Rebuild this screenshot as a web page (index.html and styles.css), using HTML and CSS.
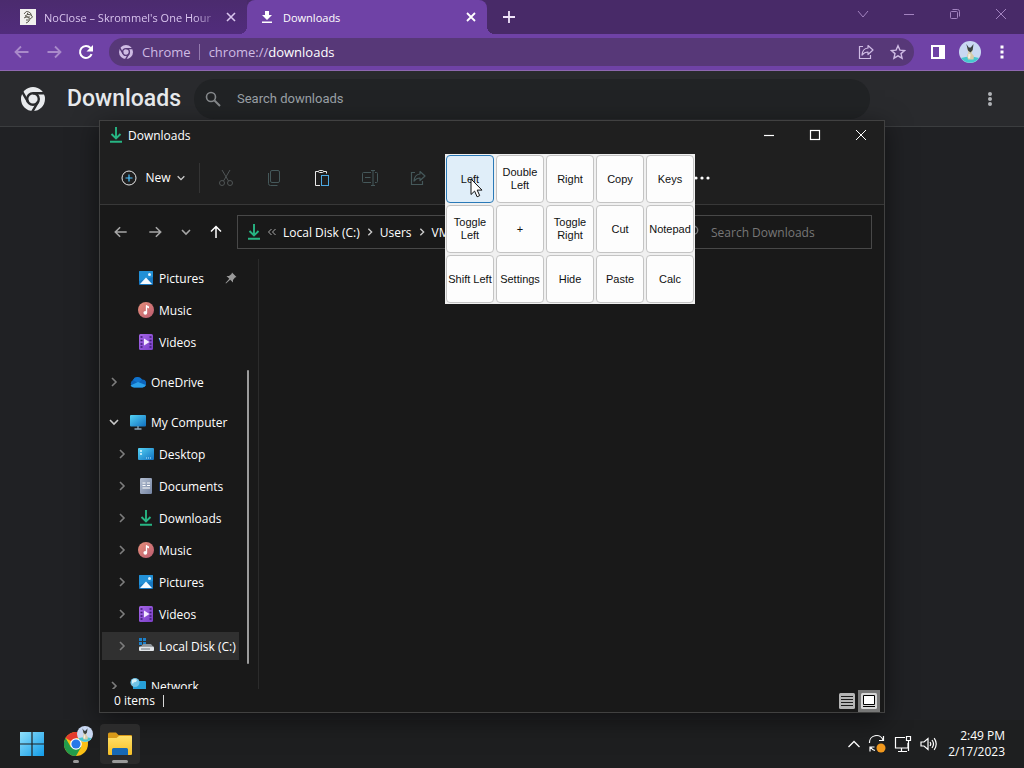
FILE: index.html
```html
<!DOCTYPE html>
<html lang="en">
  <head>
    <title>Downloads</title>
    <meta charset="UTF-8">
    <meta name="viewport" content="width=device-width, initial-scale=1.0">
    <link rel="stylesheet" href="styles.css">
  </head>
  <body>
    <!-- shared icons -->
    <svg class="sprite" aria-hidden="true">
      <defs>
        <linearGradient id="gBlue" x1="0" y1="0" x2="1" y2="1"><stop offset="0" stop-color="#55d3f5"/><stop offset="1" stop-color="#0f6fc0"/></linearGradient>
        <linearGradient id="gWin" x1="0" y1="0" x2="1" y2="1"><stop offset="0" stop-color="#8fe0fb"/><stop offset="1" stop-color="#119be8"/></linearGradient>
        <linearGradient id="gMusic" x1="0" y1="0" x2="1" y2="1"><stop offset="0" stop-color="#e8907a"/><stop offset="1" stop-color="#b95a70"/></linearGradient>
        <linearGradient id="gVideo" x1="0" y1="0" x2="1" y2="1"><stop offset="0" stop-color="#a566e8"/><stop offset="1" stop-color="#7a3fc6"/></linearGradient>
        <linearGradient id="gDoc" x1="0" y1="0" x2="1" y2="1"><stop offset="0" stop-color="#b4bfd2"/><stop offset="1" stop-color="#7585a3"/></linearGradient>
        <linearGradient id="gFolder" x1="0" y1="0" x2="0" y2="1"><stop offset="0" stop-color="#ffe069"/><stop offset="1" stop-color="#f6bf26"/></linearGradient>
      </defs>
      <symbol id="download" viewBox="0 0 16 16"><path d="M8 0v11M3.500 7l4.500 4.500L12.500 7M2 14.800h12" fill="none" stroke="#27b583" stroke-width="1.900"/></symbol>
      <symbol id="pictures" viewBox="0 0 16 16"><rect x="1" y="1" width="14" height="14" rx="1" fill="#1778c2"/><path d="M1 2a1 1 0 0 1 1-1h12a1 1 0 0 1 1 1v5L1 11z" fill="#2290d6"/><path d="M2 14l6-6.500 6 6.500z" fill="#f3faff"/><circle cx="11.500" cy="4.500" r="1.500" fill="#e0f3ff"/></symbol>
      <symbol id="music" viewBox="0 0 16 16"><circle cx="8" cy="8" r="8" fill="url(#gMusic)"/><path d="M8.500 3.500v7" stroke="#fff" stroke-width="1.300"/><path d="M8 3l3 1.500v2L8 5z" fill="#fff"/><circle cx="7.300" cy="10.800" r="1.900" fill="#fff"/></symbol>
      <symbol id="videos" viewBox="0 0 16 16"><rect x="1" width="14" height="16" rx="1.500" fill="url(#gVideo)"/><path d="M2.500 3h2M2.500 6.500h2M2.500 10h2M2.500 13h2M11.500 3h2M11.500 6.500h2M11.500 10h2M11.500 13h2" stroke="#3b1b72" stroke-width="1.600"/><path d="M6 4.500v7l5.500-3.500z" fill="#f4eaff"/></symbol>
      <symbol id="onedrive" viewBox="0 0 16 16"><path d="M4 13.500a4 4 0 0 1-1-7.500 5 5 0 0 1 9-.5 4 4 0 0 1 .5 8z" fill="#0c62b8"/><path d="M3 6a5 5 0 0 1 9-.5L8 9z" fill="#1173cc"/><path d="M4 13.500a4 4 0 0 1-3.500-2L8 8l7.800 3a3.600 3.600 0 0 1-3.300 2.500z" fill="#2aa0ea"/></symbol>
      <symbol id="computer" viewBox="0 0 16 16"><rect y="1" width="16" height="11.500" rx="1" fill="url(#gBlue)"/><path d="M8 12v3M4.500 15h7" stroke="#8ba6b8" stroke-width="1.300"/></symbol>
      <symbol id="desktop" viewBox="0 0 16 16"><rect y="2" width="16" height="12" rx="1" fill="url(#gBlue)"/><path d="M2 5h2M2 8h2" stroke="#dff7ff" stroke-width="1.500"/><path d="M8 12h6" stroke="#bfeaff" stroke-width="1" stroke-dasharray="1 1"/></symbol>
      <symbol id="documents" viewBox="0 0 16 16"><rect x="2" width="12" height="16" rx="1.200" fill="url(#gDoc)"/><path d="M4.500 5h3M9 5h3M4.500 7.500h3M9 7.500h3M4.500 10h7.500" stroke="#fff" stroke-width="1.200"/></symbol>
      <symbol id="disk" viewBox="0 0 16 16"><path d="M1 0h3v3H1zM5 0h3v3H5zM1 4h3v3H1zM5 4h3v3H5z" fill="#1d80c9"/><path d="M3 8.500l2-2.500h8l2 2.500z" fill="#8d959c"/><rect x="1" y="8.500" width="15" height="4.500" rx="1" fill="#e2e6e9"/><path d="M3 11h9" stroke="#6e777e"/></symbol>
      <symbol id="network" viewBox="0 0 16 16"><rect x="3" y="3" width="13" height="9" rx="1" fill="#27a0d8"/><path d="M9 12v3M6 15h7" stroke="#8ba6b8"/><circle cx="5" cy="4.500" r="4.500" fill="#71c3e6"/><path d="M2 2q3-2 5 0-1 3-3 2-1 3-2 1z" fill="#d9f2fa"/></symbol>
      <symbol id="chev-right" viewBox="0 0 12 12"><path d="M4 2l4 4-4 4" fill="none" stroke="currentColor" stroke-width="1.600"/></symbol>
      <symbol id="chev-down" viewBox="0 0 12 12"><path d="M2 4l4 4 4-4" fill="none" stroke="currentColor" stroke-width="1.600"/></symbol>
      <symbol id="arrow-left" viewBox="0 0 16 16"><path d="M14.500 8h-13M7 2.500L1.500 8 7 13.500" fill="none" stroke="currentColor" stroke-width="1.800"/></symbol>
      <symbol id="arrow-right" viewBox="0 0 16 16"><path d="M1.500 8h13M9 2.500L14.500 8 9 13.500" fill="none" stroke="currentColor" stroke-width="1.800"/></symbol>
      <symbol id="close" viewBox="0 0 12 12"><path d="M1 1l10 10M11 1L1 11" fill="none" stroke="currentColor"/></symbol>
      <symbol id="search" viewBox="0 0 16 16"><circle cx="6" cy="6" r="4.500" fill="none" stroke="currentColor" stroke-width="1.600"/><path d="M9.500 9.500L15 15" stroke="currentColor" stroke-width="1.900"/></symbol>
      <symbol id="share" viewBox="0 0 16 16"><path d="M5 2.500H1.500v12h11V11" fill="none" stroke="currentColor" stroke-width="1.200"/><path d="M10 1.500L15 6l-5 4.500V8Q6.500 8 4 11q.5-6.500 6-7z" fill="none" stroke="currentColor" stroke-width="1.200" stroke-linejoin="round"/></symbol>
      <symbol id="chrome-mono" viewBox="0 0 24 24"><circle cx="12" cy="12" r="12" fill="currentColor"/><g fill="none" stroke="var(--cut)" stroke-width="2.400"><circle cx="12" cy="12" r="5.800"/><path d="M12 6.200h12M7 14.900L1.200 4.800M17 14.900L11.300 24.700"/></g></symbol>
      <symbol id="dog" viewBox="0 0 22 22"><circle cx="11" cy="11" r="11" fill="#c9d8f2"/><path d="M2 17q9-3 18 0a11 11 0 0 1-18 0" fill="#47c8cf"/><path d="M8 7h5l.5 3-1 2 2.500 3-.5 3.500H9l-1-4 1.300-3z" fill="#d8cda8"/><path d="M7.300 3l2.500 3.500h2L14.500 3l-.8 6-2.200 2.500L9 9.500z" fill="#3a4140"/><path d="M9.500 12.500l2 1-.5 4-2-.5z" fill="#f3efe0"/></symbol>
    </svg>

    <div class="screen">
      <main class="browser">
        <div class="tabstrip">
          <div class="tab">
            <svg class="i16" viewBox="0 0 16 16"><path fill="#f1f1ee" d="M0 0h16v16H0z"/><path d="M4 5q2-4 5-2t2 3M5 7q3-3 6-1t-1 4M4 9q3-3 5 0t-3 5M7 4l2 2M6 11h3M5 8h5" fill="none" stroke="#5c5a50"/></svg>
            <span class="tab-title fade">NoClose – Skrommel's One Hour</span>
            <button class="tab-close" aria-label="Close tab"><svg viewBox="0 0 12 12"><path d="M2 2l8 8M10 2l-8 8" stroke="currentColor" stroke-width="1.600"/></svg></button>
          </div>
          <div class="tab active">
            <svg class="i14" viewBox="0 0 14 14"><path d="M5 1h4v4h3L7 10 2 5h3zM2 11.500h10v1.600H2z" fill="#fff"/></svg>
            <span class="tab-title">Downloads</span>
            <button class="tab-close" aria-label="Close tab"><svg viewBox="0 0 12 12"><path d="M2 2l8 8M10 2l-8 8" stroke="currentColor" stroke-width="1.800"/></svg></button>
          </div>
          <button class="new-tab" aria-label="New tab"><svg viewBox="0 0 14 14"><path d="M7 1v12M1 7h12" stroke="currentColor" stroke-width="1.800"/></svg></button>
          <div class="controls dim">
            <button aria-label="Search tabs"><svg viewBox="0 0 12 12"><path d="M1 3l5 6 5-6" fill="none" stroke="currentColor"/></svg></button>
            <button aria-label="Minimize"><svg viewBox="0 0 12 12"><path d="M1 6.500h10" stroke="currentColor"/></svg></button>
            <button aria-label="Restore"><svg viewBox="0 0 12 12"><rect x="1.500" y="3.500" width="7" height="7" rx="1" fill="none" stroke="currentColor"/><path d="M3.500 1.500h5a2 2 0 0 1 2 2v5" fill="none" stroke="currentColor"/></svg></button>
            <button aria-label="Close"><svg><use href="#close"/></svg></button>
          </div>
        </div>

        <div class="toolbar">
          <button class="tool faded" aria-label="Back"><svg class="i16"><use href="#arrow-left"/></svg></button>
          <button class="tool faded" aria-label="Forward"><svg class="i16"><use href="#arrow-right"/></svg></button>
          <button class="tool" aria-label="Reload"><svg class="i16" viewBox="0 0 16 16"><path d="M13.600 10.200A6 6 0 1 1 12.500 4" fill="none" stroke="currentColor" stroke-width="2"/><path d="M15 1v6.500H8.500z" fill="currentColor"/></svg></button>
          <div class="omnibox">
            <svg class="i14"><use href="#chrome-mono"/></svg>
            <span class="site">Chrome</span>
            <span class="url">chrome://<b>downloads</b></span>
            <button class="tool" aria-label="Share"><svg class="i16"><use href="#share"/></svg></button>
            <button class="tool" aria-label="Bookmark"><svg class="i16" viewBox="0 0 16 16"><path d="M8 1.800l1.900 4.300 4.700.4-3.600 3.100 1.100 4.600L8 11.800l-4.100 2.400L5 9.600 1.400 6.500l4.700-.4z" fill="none" stroke="currentColor" stroke-width="1.400"/></svg></button>
          </div>
          <button class="tool" aria-label="Side panel"><svg class="i16" viewBox="0 0 16 16"><path d="M1 1h14v14H1zM3 3v10h6V3z" fill="currentColor" fill-rule="evenodd"/></svg></button>
          <button class="tool" aria-label="Profile"><svg class="i22"><use href="#dog"/></svg></button>
          <button class="tool" aria-label="Menu"><svg class="i16" viewBox="0 0 16 16"><path d="M6.500 1.500h3v3h-3zM6.500 6.500h3v3h-3zM6.500 11.500h3v3h-3z" fill="currentColor"/></svg></button>
        </div>

        <header class="page-head">
          <svg class="i24"><use href="#chrome-mono"/></svg>
          <h1>Downloads</h1>
          <label class="page-search">
            <svg class="i16"><use href="#search"/></svg>
            <input type="search" placeholder="Search downloads" aria-label="Search downloads">
          </label>
          <button class="more" aria-label="More actions"><svg class="i16" viewBox="0 0 16 16"><g fill="currentColor"><circle cx="8" cy="3" r="2"/><circle cx="8" cy="8" r="2"/><circle cx="8" cy="13" r="2"/></g></svg></button>
        </header>
      </main>

      <section class="explorer">
        <div class="titlebar">
          <svg class="i16"><use href="#download"/></svg>
          <span>Downloads</span>
          <div class="controls">
            <button aria-label="Minimize"><svg viewBox="0 0 12 12"><path d="M1 6.500h10" stroke="currentColor" stroke-width="1.200"/></svg></button>
            <button aria-label="Maximize"><svg viewBox="0 0 12 12"><rect x="1.500" y="1.500" width="9" height="9" fill="none" stroke="currentColor" stroke-width="1.200"/></svg></button>
            <button aria-label="Close"><svg><use href="#close"/></svg></button>
          </div>
        </div>

        <div class="commands">
          <button class="new"><svg class="i16" viewBox="0 0 16 16"><circle cx="8" cy="8" r="7" fill="none" stroke="#e6e6e6"/><path d="M8 4.500v7M4.500 8h7" stroke="#4cc2ff" stroke-width="1.200"/></svg>New<svg class="i10"><use href="#chev-down"/></svg></button>
          <button class="cmd" aria-label="Cut" disabled><svg viewBox="0 0 16 16"><g fill="none" stroke="currentColor"><path d="M4 0l6.500 11M12 0L5.500 11"/><circle cx="4" cy="13" r="2.500"/><circle cx="12" cy="13" r="2.500"/></g></svg></button>
          <button class="cmd teal" aria-label="Copy" disabled><svg viewBox="0 0 16 16"><g fill="none" stroke="currentColor"><rect x="4.500" y=".5" width="9" height="12" rx="1.500"/><path d="M2.500 3v10.500a2 2 0 0 0 2 2h7"/></g></svg></button>
          <button class="cmd" aria-label="Paste"><svg viewBox="0 0 16 16"><path d="M6 15.500H1.500v-14h3M9.500 1.500h3v2" fill="none" stroke="#e8e8e8"/><rect x="4.500" y=".5" width="5" height="2" rx="1" fill="none" stroke="#e8e8e8"/><rect x="7.500" y="5.500" width="7" height="10" fill="none" stroke="#4ca9e4"/></svg></button>
          <button class="cmd teal" aria-label="Rename" disabled><svg viewBox="0 0 16 16"><path d="M9 2.500H1.500a1 1 0 0 0-1 1v8a1 1 0 0 0 1 1H9M13 2.500h1.500a1 1 0 0 1 1 1v8a1 1 0 0 1-1 1H13M11 .5v15M9 .5h4M9 15.500h4M3 7.500h5.500" fill="none" stroke="currentColor"/></svg></button>
          <button class="cmd teal" aria-label="Share" disabled><svg><use href="#share"/></svg></button>
          <button class="cmd see-more" aria-label="See more"><svg viewBox="0 0 16 16"><g fill="currentColor"><circle cx="2" cy="8" r="1.600"/><circle cx="8" cy="8" r="1.600"/><circle cx="14" cy="8" r="1.600"/></g></svg></button>
        </div>

        <div class="nav">
          <button class="grey" aria-label="Back"><svg class="i14"><use href="#arrow-left"/></svg></button>
          <button class="grey" aria-label="Forward"><svg class="i14"><use href="#arrow-right"/></svg></button>
          <button class="grey narrow" aria-label="Recent locations"><svg class="i12"><use href="#chev-down"/></svg></button>
          <button aria-label="Up"><svg class="i14" viewBox="0 0 14 14"><path d="M7 13V1.500M2 6.500l5-5 5 5" fill="none" stroke="currentColor" stroke-width="1.500"/></svg></button>
          <div class="address">
            <svg class="i16"><use href="#download"/></svg>
            <svg class="i10" viewBox="0 0 10 10"><path d="M4.500 2L1.500 5l3 3M8.500 2l-3 3 3 3" fill="none" stroke="#aaa"/></svg>
            <a href="#">Local Disk (C:)</a>
            <svg class="i10"><use href="#chev-right"/></svg>
            <a href="#">Users</a>
            <svg class="i10"><use href="#chev-right"/></svg>
            <a href="#">VM</a>
          </div>
          <label class="find">
            <svg class="i14"><use href="#search"/></svg>
            <input type="search" placeholder="Search Downloads" aria-label="Search Downloads">
          </label>
        </div>

        <div class="content">
          <aside class="side">
            <ul class="tree">
              <li class="sub"><span class="twist"></span><svg class="i16"><use href="#pictures"/></svg>Pictures<svg class="pin" viewBox="0 0 12 12"><path d="M7 .5L11.500 5l-1.500.5L8 8v2.500L5.200 7.700 1 11.500.5 11l3.800-4.200L1.500 4H4l2.500-2z" fill="#9a9a9a"/></svg></li>
              <li class="sub"><span class="twist"></span><svg class="i16"><use href="#music"/></svg>Music</li>
              <li class="sub"><span class="twist"></span><svg class="i16"><use href="#videos"/></svg>Videos</li>
              <li class="top"><svg class="twist"><use href="#chev-right"/></svg><svg class="i16"><use href="#onedrive"/></svg>OneDrive</li>
              <li class="top"><svg class="twist open"><use href="#chev-down"/></svg><svg class="i16"><use href="#computer"/></svg>My Computer</li>
              <li class="sub"><svg class="twist"><use href="#chev-right"/></svg><svg class="i16"><use href="#desktop"/></svg>Desktop</li>
              <li class="sub"><svg class="twist"><use href="#chev-right"/></svg><svg class="i16"><use href="#documents"/></svg>Documents</li>
              <li class="sub"><svg class="twist"><use href="#chev-right"/></svg><svg class="i16"><use href="#download"/></svg>Downloads</li>
              <li class="sub"><svg class="twist"><use href="#chev-right"/></svg><svg class="i16"><use href="#music"/></svg>Music</li>
              <li class="sub"><svg class="twist"><use href="#chev-right"/></svg><svg class="i16"><use href="#pictures"/></svg>Pictures</li>
              <li class="sub"><svg class="twist"><use href="#chev-right"/></svg><svg class="i16"><use href="#videos"/></svg>Videos</li>
              <li class="sub selected"><svg class="twist"><use href="#chev-right"/></svg><svg class="i16"><use href="#disk"/></svg>Local Disk (C:)</li>
              <li class="top"><svg class="twist"><use href="#chev-right"/></svg><svg class="i16"><use href="#network"/></svg>Network</li>
            </ul>
            <div class="scrollbar"></div>
          </aside>
          <div class="files"></div>
        </div>

        <footer class="status">
          <span class="count">0 items</span>
          <button class="view" aria-label="Details view"><svg class="i16" viewBox="0 0 16 16"><rect width="16" height="16" rx="1.500" fill="#b5b5b5"/><path d="M2 3.500h12M2 6.500h12M2 9.500h12M2 12.500h12" stroke="#1c1c1c"/></svg></button>
          <button class="view on" aria-label="Large icons view"><svg class="i16" viewBox="0 0 16 16"><rect width="16" height="16" rx="1.500" fill="#d6d6d6"/><path d="M2.500 2.500h11v9h-11z" fill="#fff" stroke="#000"/><path d="M2 13.500h12" stroke="#000"/></svg></button>
        </footer>
      </section>

      <!-- floating click pad -->
      <div class="pad">
        <button class="hover">Left</button><button>Double<br>Left</button><button>Right</button><button>Copy</button><button>Keys</button>
        <button>Toggle<br>Left</button><button>+</button><button>Toggle<br>Right</button><button>Cut</button><button>Notepad</button>
        <button>Shift Left</button><button>Settings</button><button>Hide</button><button>Paste</button><button>Calc</button>
        <svg class="cursor" viewBox="0 0 13 20"><path d="M1 1v15.500l3.600-3.400 2.500 5.700 2.600-1.200-2.500-5.500H12z" fill="#fff" stroke="#111"/></svg>
      </div>

      <nav class="taskbar">
        <button class="app" aria-label="Start"><svg class="i24" viewBox="0 0 24 24"><path d="M0 0h11.400v11.400H0zM12.600 0H24v11.400H12.600zM0 12.600h11.400V24H0zM12.600 12.600H24V24H12.600z" fill="url(#gWin)"/></svg></button>
        <button class="app" aria-label="Chrome">
          <svg class="i24" viewBox="0 0 24 24"><circle cx="12" cy="12" r="12" fill="#fbc116"/><path d="M12 12L1.600 6A12 12 0 0 1 22.400 6H12z" fill="#e33b2e"/><path d="M1.600 6A12 12 0 0 0 12 24l5.200-9L12 12 6.800 15z" fill="#229b4b"/><circle cx="12" cy="12" r="5.800" fill="#fff"/><circle cx="12" cy="12" r="4.600" fill="#2878e8"/></svg>
          <svg class="badge"><use href="#dog"/></svg>
          <span class="running"></span>
        </button>
        <button class="app current" aria-label="File Explorer">
          <svg class="i24" viewBox="0 0 24 24"><path d="M0 2a1.500 1.500 0 0 1 1.500-1.500H8L10.500 3H23a1 1 0 0 1 1 1v4H0z" fill="#d99a18"/><path d="M0 6h8.500L11 4h12a1 1 0 0 1 1 1v17a1 1 0 0 1-1 1H1a1 1 0 0 1-1-1z" fill="url(#gFolder)"/><path d="M4 23v-5.500A1.500 1.500 0 0 1 5.500 16h13a1.500 1.500 0 0 1 1.500 1.500V23z" fill="#1769b5"/></svg>
          <span class="running wide"></span>
        </button>
        <div class="tray">
          <svg class="i12" viewBox="0 0 12 12"><path d="M.5 9L6 3.500 11.500 9" fill="none" stroke="currentColor" stroke-width="1.300"/></svg>
          <svg class="i18" viewBox="0 0 18 18"><g fill="none" stroke="currentColor" stroke-width="1.200"><path d="M1.500 8A7 7 0 0 1 15 5M15.500 1v4.500H11M7 15.500A7 7 0 0 1 2.500 12M2 16.500V12h4.500"/></g><circle cx="13" cy="13" r="4.500" fill="#f39a1e"/></svg>
          <svg class="i18" viewBox="0 0 18 18"><g fill="none" stroke="currentColor" stroke-width="1.200"><path d="M11 2.500H1.500v10.500H14V8M7.500 13v3M4 16.500h9"/><path d="M12.500 1.500h4v4h-4zM14.500 5.500V16"/></g></svg>
          <svg class="i18" viewBox="0 0 18 18"><g fill="none" stroke="currentColor" stroke-width="1.200"><path d="M1 7v4h3l4 3.500v-11L4 7zM10 7q1.500 2 0 4M12 5q3 4 0 8M14.200 3.200q4 5.800 0 11.600"/></g></svg>
        </div>
        <time class="clock" datetime="2023-02-17T14:49">2:49 PM<br>2/17/2023</time>
      </nav>
    </div>
  </body>
</html>
```

FILE: styles.css
```css
*{
  box-sizing: border-box;
}

body{
  margin: 0;
  background: #202124;
  color: #fff;
  font-family: "Open Sans", "Noto Sans", sans-serif;
  font-size: 12px;
}

button, input{
  margin: 0;
  padding: 0;
  border: 0;
  background: none;
  color: inherit;
  font: inherit;
}

button{
  display: flex;
  align-items: center;
  justify-content: center;
}

input{
  flex: 1;
  min-width: 0;
  outline: none;
}

svg{
  flex: none;
}

.sprite{
  position: absolute;
  width: 0;
  height: 0;
}

.i10{ width: 10px; height: 10px; }
.i12{ width: 12px; height: 12px; }
.i14{ width: 14px; height: 14px; }
.i16{ width: 16px; height: 16px; }
.i18{ width: 18px; height: 18px; }
.i22{ width: 22px; height: 22px; }
.i24{ width: 24px; height: 24px; }

.screen{
  position: relative;
  display: flex;
  flex-direction: column;
  height: 100vh;
  overflow: hidden;
}

.browser{
  flex: 1;
}

/* tabs */
.tabstrip{
  display: flex;
  height: 34px;
  background: #482a68;
}

.tab{
  display: flex;
  align-items: center;
  width: 247px;
  padding: 0 8px 0 20px;
  gap: 8px;
  background: linear-gradient(#4b2b6e, #512c7c);
  color: #d9c5ee;
  font-size: 11px;
}

.tab.active{
  position: relative;
  width: 240px;
  padding-left: 13px;
  border-radius: 8px 8px 0 0;
  background: #6f42a6;
  color: #fff;
}

.tab.active::before, .tab.active::after{
  content: "";
  position: absolute;
  bottom: 0;
  left: -8px;
  width: 8px;
  height: 8px;
  background: radial-gradient(circle at 0 0, transparent 8px, #6f42a6 8px);
}

.tab.active::after{
  left: 100%;
  background: radial-gradient(circle at 100% 0, transparent 8px, #6f42a6 8px);
}

.tab-title{
  flex: 1;
  overflow: hidden;
  white-space: nowrap;
}

.tab.active .tab-title{
  padding-left: 1px;
}

.fade{
  mask-image: linear-gradient(to right, #000 150px, transparent 178px);
}

.tab-close{
  width: 16px;
  height: 16px;
}

.tab-close svg{
  width: 12px;
  height: 12px;
}

.new-tab{
  width: 44px;
  color: #f0e4fa;
}

.new-tab svg{
  width: 14px;
  height: 14px;
}

.controls{
  display: flex;
  margin-left: auto;
}

.controls button{
  width: 46px;
  height: 28px;
}

.controls svg{
  width: 12px;
  height: 12px;
}

.dim{
  color: #a383c0;
}

/* address bar */
.toolbar{
  display: flex;
  align-items: center;
  height: 37px;
  padding: 0 6px;
  border-bottom: 1px solid #8e68b0;
  background: #6f42a6;
}

.tool{
  width: 32px;
  height: 28px;
}

.faded{
  color: #a98aca;
}

.omnibox{
  --cut: #573878;
  display: flex;
  flex: 1;
  align-items: center;
  height: 28px;
  margin: 0 8px 0 7px;
  padding-left: 10px;
  border-radius: 14px;
  background: #573878;
  color: #cfbbe4;
  font-size: 13px;
}

.site{
  margin: 0 9px;
  padding-right: 8px;
  border-right: 1px solid #9379ae;
  line-height: 16px;
}

.url{
  flex: 1;
}

.url b{
  color: #fff;
  font-weight: 400;
}

/* downloads page */
.page-head{
  --cut: #292a2d;
  display: flex;
  align-items: center;
  height: 56px;
  padding-left: 21px;
  border-bottom: 1px solid #3b3d3f;
  background: #292a2d;
  color: #e8eaed;
  font-family: Roboto, sans-serif;
}

.page-head h1{
  width: 112px;
  margin: 0 15px 0 22px;
  font-size: 23px;
  font-weight: 500;
}

.page-search{
  display: flex;
  align-items: center;
  flex: 1;
  gap: 16px;
  height: 40px;
  padding-left: 11px;
  border-radius: 20px;
  background: #212325;
  color: #85888b;
  font-size: 13px;
}

.page-search input::placeholder{
  color: #9aa0a6;
}

.more{
  width: 40px;
  margin: 0 14px 0 100px;
  color: #b0b3b6;
}

/* explorer window */
.explorer{
  position: absolute;
  top: 120px;
  right: 139px;
  bottom: 55px;
  left: 99px;
  display: flex;
  flex-direction: column;
  border: 1px solid #414141;
  background: #191919;
  box-shadow: 0 6px 24px rgba(0, 0, 0, .5);
}

.titlebar{
  display: flex;
  align-items: center;
  height: 28px;
  padding-left: 8px;
  gap: 4px;
  background: #1f1f1f;
}

.commands{
  display: flex;
  align-items: center;
  height: 56px;
  padding-top: 2px;
  border-bottom: 1px solid #383838;
  background: #1f1f1f;
}

.new{
  width: 100px;
  height: 30px;
  padding-left: 8px;
  gap: 8px;
  border-right: 1px solid #343434;
  white-space: nowrap;
}

.new .i10{
  margin-left: -3px;
}

.new .i10, .address .i10{
  color: #ccc;
}

.cmd{
  width: 48px;
  height: 48px;
}

.new + .cmd{
  margin-left: 2px;
}

.cmd svg{
  width: 16px;
  height: 16px;
}

.cmd:disabled{
  color: #505556;
}

.cmd.teal:disabled{
  color: #45585a;
}

.see-more{
  margin-left: 236px;
}

.nav{
  display: flex;
  align-items: center;
  height: 54px;
  padding: 0 12px 0 4px;
}

.nav button{
  width: 34px;
  height: 34px;
}

.nav button.narrow{
  width: 28px;
}

.nav .narrow + button{
  width: 32px;
  margin-right: 5px;
}

.grey{
  color: #a6a6a6;
}

.address, .find{
  display: flex;
  align-items: center;
  height: 34px;
  border: 1px solid #484848;
}

.address{
  flex: 1;
  gap: 5px;
  padding-left: 8px;
}

.address .i16 + .i10{
  margin-right: 1px;
}

.address a{
  color: #fff;
  text-decoration: none;
}

.find{
  width: 190px;
  padding-left: 2px;
  gap: 12px;
  color: #777;
}

.find .i14{
  transform: scaleX(-1);
}

.find input::placeholder{
  color: #777;
}

.content{
  display: flex;
  flex: 1;
  min-height: 0;
}

.side{
  display: flex;
  width: 159px;
  padding: 3px 9px 0 2px;
  border-right: 1px solid #2b2b2b;
  overflow: hidden;
}

.tree{
  flex: 1;
  margin: 0;
  padding: 0;
  list-style: none;
  white-space: nowrap;
}

.tree li{
  display: flex;
  align-items: center;
  height: 32px;
  padding-left: 6px;
  gap: 5px;
}

.tree li.top{
  margin-top: 8px;
}

.tree li.sub{
  padding-left: 14px;
}

.tree li.selected{
  height: 28px;
  margin: 2px 0;
  background: #303030;
}

.tree li.selected + .top{
  margin-top: 10px;
}

.twist{
  width: 12px;
  height: 12px;
  margin-right: 5px;
  color: #7d7d7d;
}

.twist.open{
  color: #c8c8c8;
}

.pin{
  width: 12px;
  height: 12px;
  margin: 0 2px 0 auto;
}

.scrollbar{
  width: 2px;
  height: 294px;
  margin: 108px 0 0 8px;
  border-radius: 1px;
  background: #9c9c9c;
}

.files{
  flex: 1;
}

.status{
  display: flex;
  align-items: center;
  height: 23px;
  padding: 0 4px 0 14px;
  background: #191919;
}

.count{
  margin-right: auto;
  padding-right: 8px;
  border-right: 1px solid #d8d8d8;
  line-height: 12px;
}

.view{
  width: 22px;
  height: 22px;
}

.view.on{
  background: #777;
}

/* click pad */
.pad{
  position: absolute;
  top: 154px;
  left: 445px;
  display: grid;
  grid-template-columns: repeat(5, 48px);
  gap: 2px;
  padding: 1px;
  background: #f0f0f0;
  color: #111;
  font: 11px/13px "Liberation Sans", sans-serif;
}

.pad button{
  height: 48px;
  border: 1px solid #c4c4c4;
  border-radius: 4px;
  background: #fdfdfd;
  white-space: nowrap;
}

.pad .hover{
  border-color: #2a7ab8;
  background: #e0eef9;
}

.cursor{
  position: absolute;
  top: 24px;
  left: 25px;
  width: 13px;
  height: 20px;
}

/* taskbar */
.taskbar{
  display: flex;
  align-items: center;
  height: 48px;
  padding: 0 19px 0 12px;
  gap: 4px;
  background: #1e1f20;
}

.app{
  position: relative;
  width: 40px;
  height: 40px;
  border-radius: 4px;
}

.app.current{
  background: #2b2b2b;
}

.badge{
  position: absolute;
  top: 2px;
  right: 3px;
  width: 16px;
  height: 16px;
}

.running{
  position: absolute;
  bottom: 1px;
  width: 6px;
  height: 3px;
  border-radius: 2px;
  background: #9a9a9a;
}

.running.wide{
  width: 16px;
}

.tray{
  display: flex;
  align-items: center;
  margin-left: auto;
  gap: 8px;
}

.clock{
  margin-left: 6px;
  line-height: 16px;
  text-align: right;
}
```
